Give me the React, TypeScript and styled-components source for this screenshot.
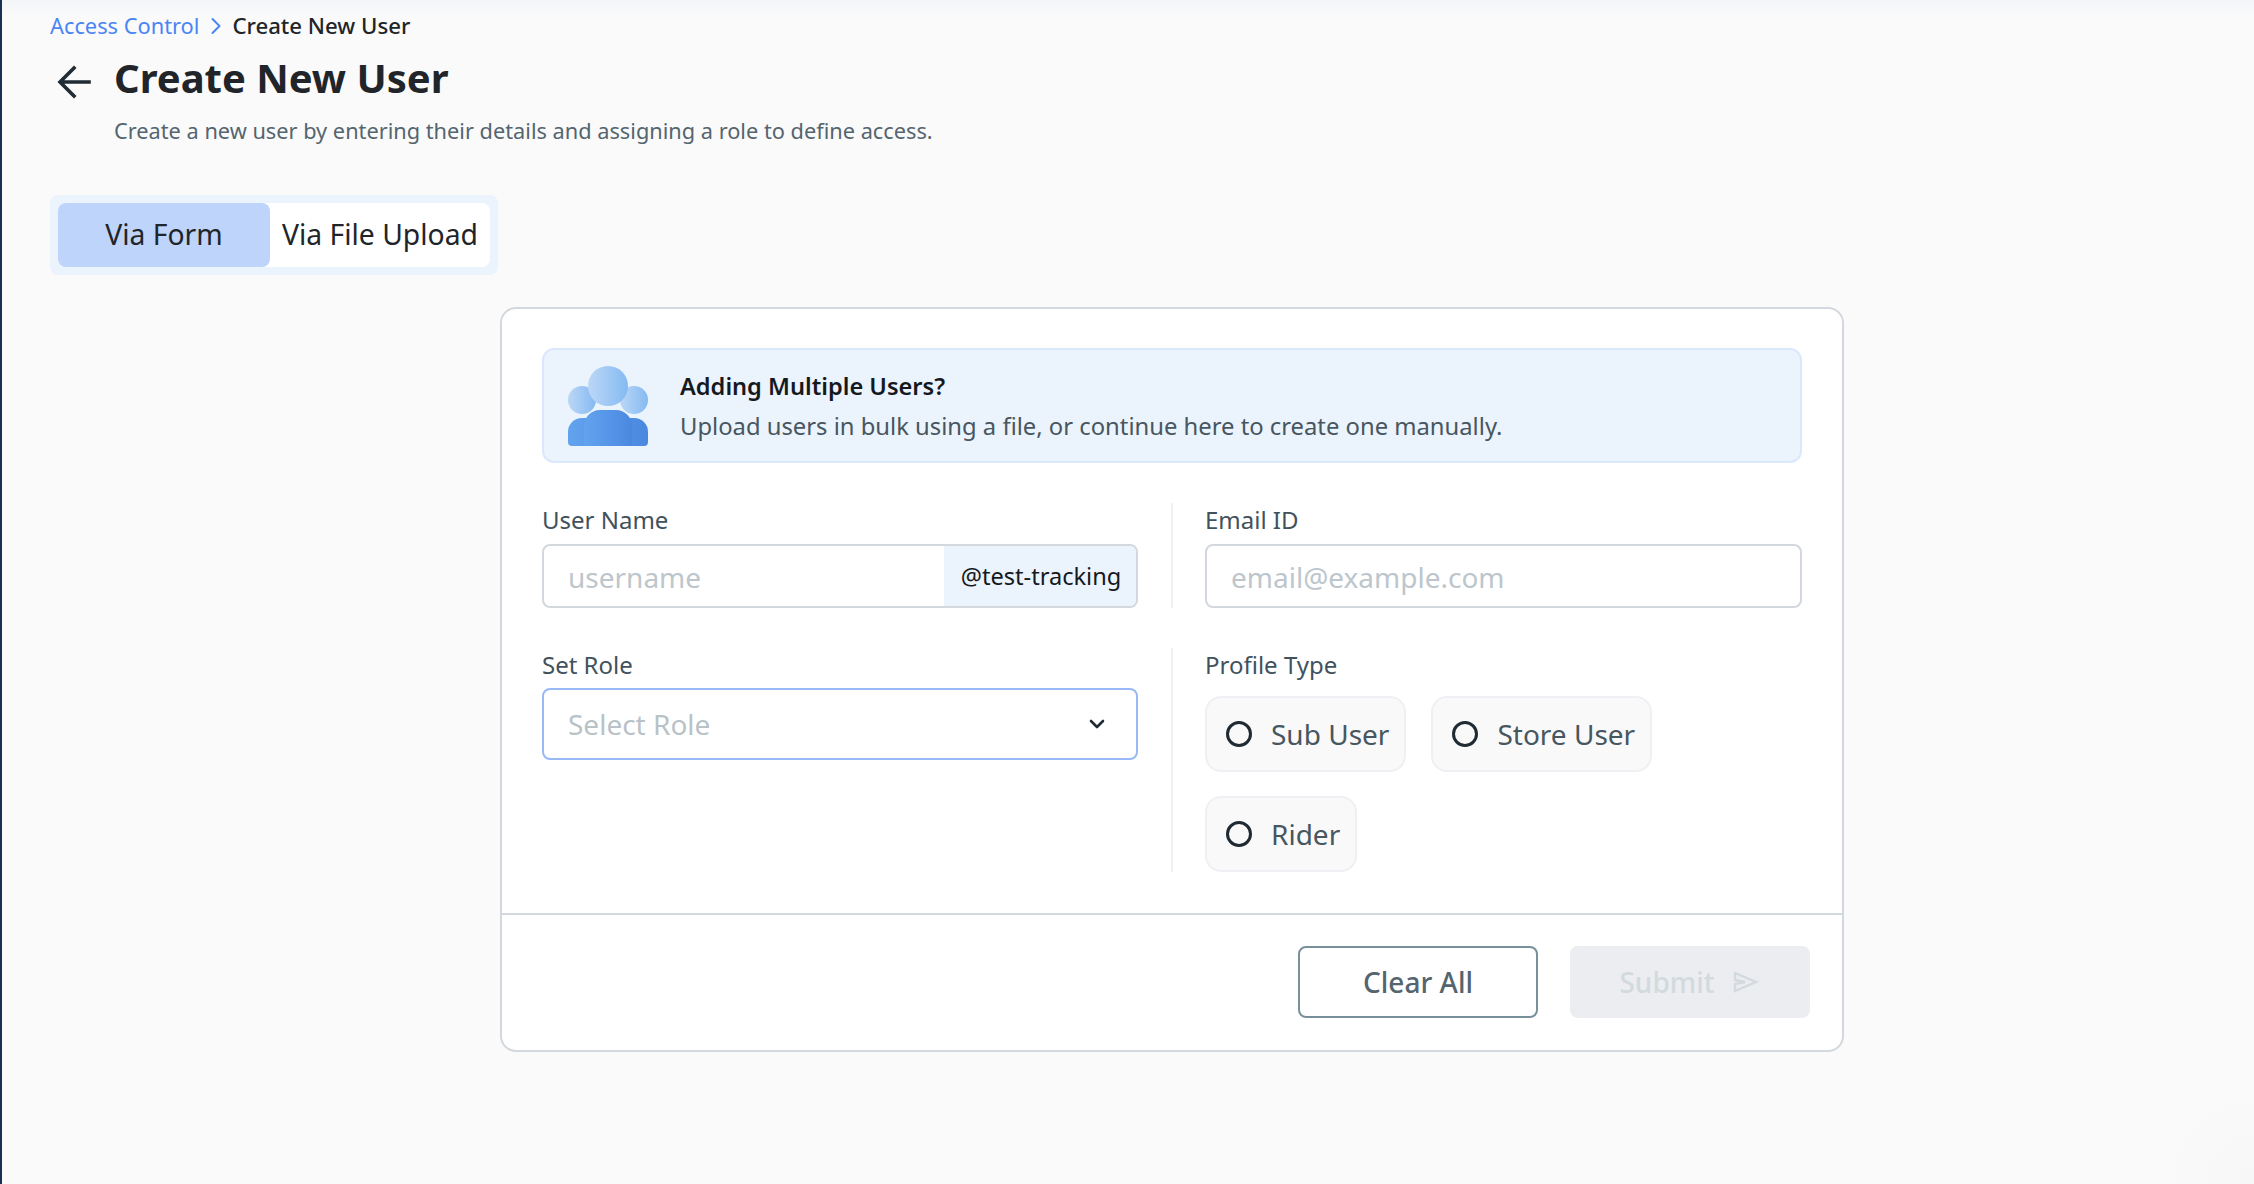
import React from "react";
import styled, { createGlobalStyle } from "styled-components";
import { ChevronDown, ChevronRight } from "lucide-react";

const Global = createGlobalStyle`
  html, body { margin: 0; padding: 0; background: #fafafa; }
  * { box-sizing: border-box; }
  body { font-family: "Noto Sans", "Open Sans", sans-serif; color: #212529; }
`;

const Page = styled.div`
  display: flex;
  width: 2254px;
  height: 1184px;
  overflow: hidden;
  background:
    radial-gradient(circle at 100% 100%, #f7f7f7 0, rgba(250, 250, 250, 0) 110px),
    linear-gradient(180deg, #f3f5f9 0, #fafafa 16px);
`;
const Rail = styled.div`
  width: 2px;
  flex: none;
  background: #1b2f55;
`;
const Main = styled.main`
  flex: 1;
  padding: 12px 0 0 48px;
`;
const Breadcrumb = styled.nav`
  display: flex;
  align-items: center;
  height: 28px;
  font-size: 22px;
  line-height: 28px;
`;
const Crumb = styled.span`
  color: #4a85f6;
  font-size: 21.8px;
`;
const CrumbNow = styled.span`
  color: #212529;
  font-weight: 500;
  font-size: 22.2px;
`;
const CrumbSep = styled.span`
  display: flex;
  width: 33px;
  justify-content: center;
  color: #4a85f6;
`;
const TitleRow = styled.div`
  display: flex;
  align-items: center;
  margin-top: 10px;
  height: 56px;
`;
const BackIcon = styled.span`
  display: flex;
  flex: none;
  width: 64px;
  padding: 8px 0 0 7px;
  color: #212b33;
`;
const Title = styled.h1`
  margin: 0;
  font-size: 40px;
  line-height: 56px;
  font-weight: 700;
  color: #212529;
`;
const Subtitle = styled.p`
  margin: 11px 0 0 64px;
  font-size: 21.75px;
  line-height: 28px;
  color: #54656f;
`;
const Tabs = styled.div`
  display: inline-flex;
  margin-top: 50px;
  padding: 8px;
  background: #ebf3fd;
  border-radius: 8px;
`;
const TabInner = styled.div`
  display: flex;
  background: #fff;
  border-radius: 8px;
`;
const Tab = styled.button<{ $active?: boolean }>`
  height: 64px;
  width: ${(p) => (p.$active ? "212px" : "220px")};
  padding: 0 0 2px;
  border: 0;
  border-radius: 8px;
  background: ${(p) => (p.$active ? "#bfd4fa" : "transparent")};
  font: 400 28.3px/38px "Noto Sans", sans-serif;
  color: #212529;
`;
const Card = styled.section`
  width: 1344px;
  margin: 32px 0 0 450px;
  background: #fff;
  border: 2px solid #d2d8dd;
  border-radius: 16px;
`;
const CardBody = styled.div`
  padding: 39px 40px 41px;
`;
const Banner = styled.div`
  display: flex;
  align-items: center;
  gap: 32px;
  height: 115px;
  padding-left: 24px;
  background: #ebf3fd;
  border: 2px solid #dbe7fb;
  border-radius: 12px;
`;
const BannerTitle = styled.div`
  font-size: 23.6px;
  line-height: 30px;
  font-weight: 600;
  color: #15191d;
`;
const BannerText = styled.div`
  margin-top: 10px;
  font-size: 23.8px;
  line-height: 30px;
  color: #47565f;
`;
const FormGrid = styled.div`
  display: grid;
  grid-template-columns: 596px 1fr;
  grid-template-rows: 105px 224px;
  row-gap: 40px;
  margin-top: 40px;
`;
const Field = styled.div`
  min-width: 0;
`;
const RightField = styled(Field)`
  margin-left: 33px;
  padding-left: 32px;
  border-left: 2px solid #eef0f2;
`;
const Label = styled.div`
  height: 40px;
  font-size: 24px;
  line-height: 34px;
  color: #41525d;
`;
const InputLabel = styled(Label)`
  height: 41px;
`;
const InputBox = styled.div`
  display: flex;
  align-items: stretch;
  height: 64px;
  border: 2px solid #d2d8dd;
  border-radius: 8px;
  overflow: hidden;
  background: #fff;
`;
const Input = styled.input`
  flex: 1;
  min-width: 0;
  padding: 2px 0 0 24px;
  border: 0;
  outline: 0;
  background: transparent;
  font: 400 28px "Noto Sans", sans-serif;
  color: #212529;
  &::placeholder { color: #bcc6cc; opacity: 1; }
`;
const Addon = styled.div`
  display: flex;
  align-items: center;
  justify-content: center;
  flex: none;
  width: 192px;
  padding-left: 2px;
  background: #ebf3fd;
  font-size: 23.6px;
  color: #15191d;
`;
const Select = styled.div`
  display: flex;
  align-items: center;
  justify-content: space-between;
  height: 72px;
  padding: 0 27px 0 24px;
  border: 2px solid #98b9f6;
  border-radius: 8px;
  font-size: 28px;
  color: #b9c2c7;
`;
const Options = styled.div`
  display: flex;
  flex-wrap: wrap;
  gap: 24px 25px;
  margin-top: 8px;
`;
const Option = styled.label`
  display: flex;
  align-items: center;
  gap: 19px;
  height: 76px;
  padding: 0 15px 0 19px;
  background: #f9f9fa;
  border: 2px solid #f0f0f4;
  border-radius: 16px;
  font-size: 28px;
  color: #47565f;
`;
const Radio = styled.span`
  width: 26px;
  height: 26px;
  flex: none;
  border: 3px solid #1f2a33;
  border-radius: 50%;
`;
const Footer = styled.div`
  display: flex;
  justify-content: flex-end;
  gap: 32px;
  padding: 31px 32px 32px 0;
  border-top: 2px solid #d2d8dd;
`;
const ClearButton = styled.button`
  width: 240px;
  height: 72px;
  background: #fff;
  border: 2px solid #78909c;
  border-radius: 8px;
  font: 500 28px "Noto Sans", sans-serif;
  color: #54656f;
`;
const SubmitButton = styled.button`
  display: flex;
  align-items: center;
  justify-content: center;
  gap: 18px;
  width: 240px;
  height: 72px;
  padding: 0 2px 0 0;
  background: #ebedf0;
  border: 0;
  border-radius: 8px;
  font: 500 28px "Noto Sans", sans-serif;
  color: #d3dadd;
`;

const PeopleIcon = () => (
  <svg width="80" height="80" viewBox="0 0 80 80" aria-hidden="true">
    <defs>
      <linearGradient id="head" x1="0" x2="1" y1="0" y2="0">
        <stop offset="0" stopColor="#bcd7f6" />
        <stop offset="1" stopColor="#84baf2" />
      </linearGradient>
      <linearGradient id="body" x1="0" x2="1" y1="0" y2="0">
        <stop offset="0" stopColor="#62a3ee" />
        <stop offset="1" stopColor="#4a88e0" />
      </linearGradient>
    </defs>
    <circle cx="14" cy="34" r="14" fill="url(#head)" />
    <circle cx="66" cy="34" r="14" fill="url(#head)" />
    <path d="M0 66a14 14 0 0 1 14-14h52a14 14 0 0 1 14 14v10a4 4 0 0 1-4 4H4a4 4 0 0 1-4-4z" fill="url(#body)" />
    <circle cx="40" cy="20" r="20" fill="url(#head)" />
    <path d="M16 60a16 16 0 0 1 16-16h16a16 16 0 0 1 16 16v20H16z" fill="url(#body)" />
  </svg>
);

const BackArrow = () => (
  <svg width="34" height="34" viewBox="0 0 34 34" fill="none" stroke="currentColor" strokeWidth="3.6" strokeLinecap="square" aria-hidden="true">
    <path d="M17 3 3 17l14 14M4 17h28" />
  </svg>
);

const SendIcon = () => (
  <svg width="26" height="24" viewBox="0 0 26 24" fill="none" stroke="#d3dadd" strokeWidth="2.4" aria-hidden="true">
    <path d="M2 3l21 9L2 21v-7l10-2L2 10z" strokeLinejoin="miter" />
  </svg>
);

export default function App() {
  return (
    <Page>
      <Global />
      <Rail />
      <Main>
        <Breadcrumb>
          <Crumb>Access Control</Crumb>
          <CrumbSep><ChevronRight size={28} strokeWidth={1.7} /></CrumbSep>
          <CrumbNow>Create New User</CrumbNow>
        </Breadcrumb>
        <TitleRow>
          <BackIcon><BackArrow /></BackIcon>
          <Title>Create New User</Title>
        </TitleRow>
        <Subtitle>Create a new user by entering their details and assigning a role to define access.</Subtitle>
        <Tabs>
          <TabInner>
            <Tab $active>Via Form</Tab>
            <Tab>Via File Upload</Tab>
          </TabInner>
        </Tabs>
        <Card>
          <CardBody>
            <Banner>
              <PeopleIcon />
              <div>
                <BannerTitle>Adding Multiple Users?</BannerTitle>
                <BannerText>Upload users in bulk using a file, or continue here to create one manually.</BannerText>
              </div>
            </Banner>
            <FormGrid>
              <Field>
                <InputLabel>User Name</InputLabel>
                <InputBox>
                  <Input placeholder="username" readOnly />
                  <Addon>@test-tracking</Addon>
                </InputBox>
              </Field>
              <RightField>
                <InputLabel>Email ID</InputLabel>
                <InputBox>
                  <Input placeholder="email@example.com" readOnly />
                </InputBox>
              </RightField>
              <Field>
                <Label>Set Role</Label>
                <Select>
                  Select Role
                  <ChevronDown size={24} strokeWidth={2.6} color="#212b33" />
                </Select>
              </Field>
              <RightField>
                <Label>Profile Type</Label>
                <Options>
                  <Option><Radio />Sub User</Option>
                  <Option><Radio />Store User</Option>
                  <Option><Radio />Rider</Option>
                </Options>
              </RightField>
            </FormGrid>
          </CardBody>
          <Footer>
            <ClearButton>Clear All</ClearButton>
            <SubmitButton>Submit <SendIcon /></SubmitButton>
          </Footer>
        </Card>
      </Main>
    </Page>
  );
}
